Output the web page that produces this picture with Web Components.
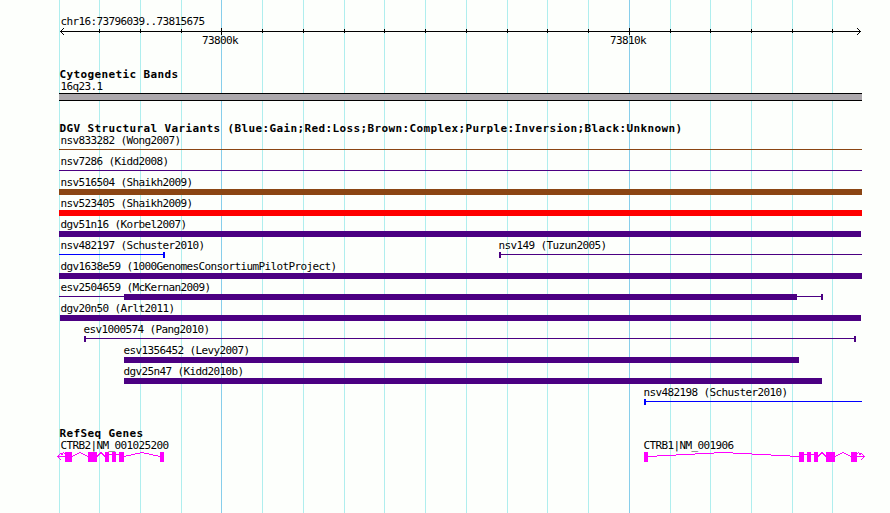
<!DOCTYPE html>
<html lang="en">
<head>
<meta charset="utf-8">
<title>chr16:73796039..73815675</title>
<style>
    body {
        margin: 0;
        background: #fdfffc;
        font-family: "DejaVu Sans Mono", "Liberation Mono", monospace;
    }
</style>
</head>
<body>
<genome-view>
    <scale-ruler region="chr16:73796039..73815675"></scale-ruler>
    <feature-track name="Cytogenetic Bands" style="margin-top: 21px">
        <cyto-band name="16q23.1"></cyto-band>
    </feature-track>
    <feature-track name="DGV Structural Variants (Blue:Gain;Red:Loss;Brown:Complex;Purple:Inversion;Black:Unknown)" style="margin-top: 20px">
        <track-row><sv-feature name="nsv833282 (Wong2007)" type="complex" from="59" to="862"></sv-feature></track-row>
        <track-row><sv-feature name="nsv7286 (Kidd2008)" type="inversion" from="59" to="862"></sv-feature></track-row>
        <track-row><sv-feature name="nsv516504 (Shaikh2009)" type="complex" from="59" to="862" thick="59,862"></sv-feature></track-row>
        <track-row><sv-feature name="nsv523405 (Shaikh2009)" type="loss" from="59" to="862" thick="59,862"></sv-feature></track-row>
        <track-row><sv-feature name="dgv51n16 (Korbel2007)" type="inversion" from="59" to="861" thick="59,861"></sv-feature></track-row>
        <track-row>
            <sv-feature name="nsv482197 (Schuster2010)" type="gain" from="59" to="165" caps="end"></sv-feature>
            <sv-feature name="nsv149 (Tuzun2005)" type="inversion" from="499" to="862" caps="start"></sv-feature>
        </track-row>
        <track-row><sv-feature name="dgv1638e59 (1000GenomesConsortiumPilotProject)" type="inversion" from="59" to="862" thick="59,862"></sv-feature></track-row>
        <track-row><sv-feature name="esv2504659 (McKernan2009)" type="inversion" from="59" to="823" thick="124,797" caps="end"></sv-feature></track-row>
        <track-row><sv-feature name="dgv20n50 (Arlt2011)" type="inversion" from="60" to="861" thick="60,861"></sv-feature></track-row>
        <track-row><sv-feature name="esv1000574 (Pang2010)" type="inversion" from="84" to="856" caps="start end"></sv-feature></track-row>
        <track-row><sv-feature name="esv1356452 (Levy2007)" type="inversion" from="124" to="799" thick="124,799"></sv-feature></track-row>
        <track-row><sv-feature name="dgv25n47 (Kidd2010b)" type="inversion" from="124" to="822" thick="124,822"></sv-feature></track-row>
        <track-row><sv-feature name="nsv482198 (Schuster2010)" type="gain" from="644" to="862" caps="start"></sv-feature></track-row>
    </feature-track>
    <feature-track name="RefSeq Genes" style="margin-top: 18px">
        <track-row>
            <gene-model name="CTRB2|NM_001025200" from="57" to="164" label-at="60.5" strand="-"
                exons="65,72 88,97 105,109 112,116 119,124 160,164"></gene-model>
            <gene-model name="CTRB1|NM_001906" from="644" to="865" label-at="643.5" strand="+"
                exons="644,648 799,804 807,811 814,818 826,835 851,857"></gene-model>
        </track-row>
    </feature-track>
</genome-view>

<script>
const LEFT = 59;
const RIGHT = 862;
const MINOR = [59, 99, 140, 181, 262, 303, 344, 384, 425, 466, 507, 547, 588, 670, 710, 751, 792, 832];
const MAJOR = [{ x: 221, label: '73800k' }, { x: 629, label: '73810k' }];

const COLORS = {
    gain: '#0000ff',
    loss: '#ff0000',
    complex: '#8b4513',
    inversion: '#4b0082',
    unknown: '#000000'
};

const LABEL_CSS = `
    .label {
        height: 11px;
        line-height: 11px;
        font-size: 11px;
        letter-spacing: -0.622px;
        white-space: nowrap;
        color: #000;
    }
    svg {
        display: block;
        overflow: visible;
        shape-rendering: crispEdges;
    }
`;

class GenomeView extends HTMLElement {
    constructor() {
        super();
        this.attachShadow({ mode: 'open' });
        const lines = MINOR.map(x => `<rect x="${x}" width="1" height="513" fill="#afeeee"/>`)
            .concat(MAJOR.map(m => `<rect x="${m.x}" width="1" height="513" fill="#87ceeb"/>`));
        this.shadowRoot.innerHTML = `
            <style>
                :host {
                    display: block;
                    position: relative;
                    box-sizing: border-box;
                    width: 890px;
                    height: 513px;
                    padding-top: 16px;
                    overflow: hidden;
                }
                .grid {
                    position: absolute;
                    top: 0;
                    left: 0;
                }
                .content {
                    position: relative;
                    display: flex;
                    flex-direction: column;
                }
            </style>
            <svg class="grid" width="890" height="513" shape-rendering="crispEdges">${lines.join('')}</svg>
            <div class="content"><slot></slot></div>
        `;
    }
}
customElements.define('genome-view', GenomeView);

class ScaleRuler extends HTMLElement {
    constructor() {
        super();
        this.attachShadow({ mode: 'open' });
    }

    connectedCallback() {
        const minor = MINOR.slice(1).map(x => `<rect x="${x}" y="1" width="1" height="4"/>`).join('');
        const major = MAJOR.map(m => `<rect x="${m.x}" y="0" width="1" height="7"/>`).join('');
        this.shadowRoot.innerHTML = `
            <style>
                :host { display: block; height: 30px; }
                ${LABEL_CSS}
                .region { padding-left: 60.5px; margin-bottom: 1px; }
                .ticks {
                    display: grid;
                    grid-template-columns: repeat(890, 1px);
                }
                .ticks .label { grid-row: 1; width: 0; }
            </style>
            <div class="label region">${this.getAttribute('region')}</div>
            <svg width="890" height="7">
                <rect x="60" y="3" width="801" height="1"/>
                ${minor}${major}
                <path d="M60 3h1v1h-1zM61 2h1v3h-1zM62 1h1v1h-1zM62 5h1v1h-1zM63 0h1v1h-1zM63 6h1v1h-1z"/>
                <path d="M860 3h1v1h-1zM859 2h1v3h-1zM858 1h1v1h-1zM858 5h1v1h-1zM857 0h1v1h-1zM857 6h1v1h-1z"/>
            </svg>
            <div class="ticks">
                ${MAJOR.map(m => `<div class="label" style="grid-column: ${m.x - 18}">${m.label}</div>`).join('')}
            </div>
        `;
    }
}
customElements.define('scale-ruler', ScaleRuler);

class FeatureTrack extends HTMLElement {
    constructor() {
        super();
        this.attachShadow({ mode: 'open' });
    }

    connectedCallback() {
        this.shadowRoot.innerHTML = `
            <style>
                :host { display: block; }
                h2 {
                    box-sizing: border-box;
                    margin: 0;
                    padding: 1px 0 0 59.5px;
                    height: 14px;
                    line-height: 13px;
                    font-size: 11px;
                    letter-spacing: 0.378px;
                    font-weight: bold;
                    white-space: nowrap;
                }
            </style>
            <h2>${this.getAttribute('name')}</h2>
            <slot></slot>
        `;
    }
}
customElements.define('feature-track', FeatureTrack);

// One pixel per column, so every feature sits at its own map position
class TrackRow extends HTMLElement {
    constructor() {
        super();
        this.attachShadow({ mode: 'open' });
        this.shadowRoot.innerHTML = `
            <style>
                :host {
                    display: grid;
                    grid-template-columns: repeat(890, 1px);
                    height: 21px;
                }
            </style>
            <slot></slot>
        `;
    }
}
customElements.define('track-row', TrackRow);

class CytoBand extends HTMLElement {
    constructor() {
        super();
        this.attachShadow({ mode: 'open' });
    }

    connectedCallback() {
        this.shadowRoot.innerHTML = `
            <style>
                :host { display: block; padding-left: ${LEFT}px; }
                ${LABEL_CSS}
                .label { padding-left: 1.5px; }
                .band {
                    width: ${RIGHT - LEFT}px;
                    height: 6px;
                    margin-top: 1px;
                    background: #aca8ac;
                    border: solid #000;
                    border-width: 1px 0;
                }
            </style>
            <div class="label">${this.getAttribute('name')}</div>
            <div class="band"></div>
        `;
    }
}
customElements.define('cyto-band', CytoBand);

class SvFeature extends HTMLElement {
    constructor() {
        super();
        this.attachShadow({ mode: 'open' });
    }

    connectedCallback() {
        const from = Number(this.getAttribute('from'));
        const to = Number(this.getAttribute('to'));
        const width = to - from;
        const caps = this.getAttribute('caps') || '';
        const thick = this.getAttribute('thick');
        let shapes = `<rect x="0" y="2" width="${width}" height="1"/>`;

        if (thick) {
            const [a, b] = thick.split(',').map(Number);
            shapes += `<rect x="${a - from}" y="0" width="${b - a}" height="6"/>`;
        }
        if (caps.includes('start')) shapes += '<rect x="0" y="0" width="2" height="6"/>';
        if (caps.includes('end')) shapes += `<rect x="${width - 2}" y="0" width="2" height="6"/>`;

        this.shadowRoot.innerHTML = `
            <style>
                :host {
                    display: block;
                    grid-row: 1;
                    grid-column: ${from + 1} / ${to + 1};
                }
                ${LABEL_CSS}
                .label {
                    margin-bottom: 1px;
                    margin-left: ${from < 61 ? 60.5 - from : -0.6}px;
                }
            </style>
            <div class="label">${this.getAttribute('name')}</div>
            <svg width="${width}" height="6" fill="${COLORS[this.getAttribute('type')]}">${shapes}</svg>
        `;
    }
}
customElements.define('sv-feature', SvFeature);

class GeneModel extends HTMLElement {
    constructor() {
        super();
        this.attachShadow({ mode: 'open' });
    }

    connectedCallback() {
        const from = Number(this.getAttribute('from'));
        const to = Number(this.getAttribute('to'));
        const width = to - from;
        const labelAt = Number(this.getAttribute('label-at'));
        const exons = this.getAttribute('exons').split(' ').map(e => e.split(',').map(n => n - from));
        const boxes = exons.map(([a, b]) => `<rect x="${a}" y="0" width="${b - a}" height="10" fill="#f0f" stroke="none"/>`);
        const introns = exons.slice(1).map(([next], i) => {
            const prev = exons[i][1];
            if (next - prev < 5) return `<path d="M${prev} 2.5H${next}"/>`;
            return `<path d="M${prev} 4.5L${(prev + next) / 2} 0.5L${next} 4.5"/>`;
        });

        // arrow head with the short kink between it and the last exon, pointing right
        const pixels = [[-1, 4], [-2, 3], [-3, 2], [-4, 1], [-2, 5], [-3, 6], [-4, 7],
            [-5, 2], [-6, 1], [-7, 0], [-8, 1], [-5, 1], [-6, 2]];
        const forward = this.getAttribute('strand') === '+';
        const head = pixels.map(([x, y]) => `<rect x="${forward ? width + x : -x - 1}" y="${y}" width="1" height="1"/>`);
        const shaft = `<rect x="${forward ? width - 8 : 0}" y="4" width="8" height="1"/>`;

        this.shadowRoot.innerHTML = `
            <style>
                :host {
                    display: block;
                    grid-row: 1;
                    grid-column: ${from + 1} / ${to + 1};
                }
                ${LABEL_CSS}
                .label {
                    margin-bottom: 1px;
                    margin-left: ${labelAt - from}px;
                }
            </style>
            <div class="label">${this.getAttribute('name')}</div>
            <svg width="${width}" height="10" fill="none" stroke="#f0f">
                ${introns.join('')}${boxes.join('')}
                <g fill="#f0f" stroke="none">${shaft}${head.join('')}</g>
            </svg>
        `;
    }
}
customElements.define('gene-model', GeneModel);
</script>
</body>
</html>
